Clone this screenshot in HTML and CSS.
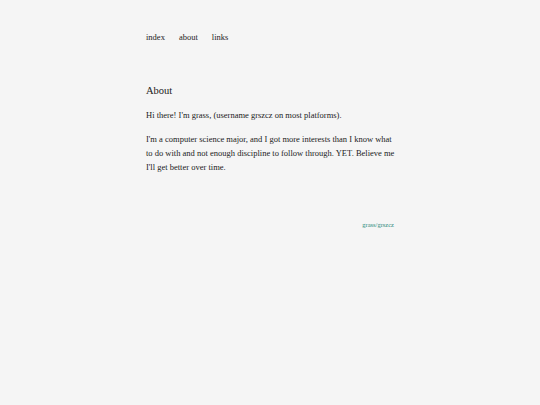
FILE: index.html
```html
<!DOCTYPE html>
<html>
<head>
<meta charset="utf-8">
<link rel="stylesheet" href="styles.css">
</head>
<body>
<div class="page">
  <nav class="nav">
    <a href="#">index</a>
    <a href="#">about</a>
    <a href="#">links</a>
  </nav>
  <main class="content">
    <h1 class="title">About</h1>
    <p>Hi there! I'm grass, (username grszcz on most platforms).</p>
    <p>I'm a computer science major, and I got more interests than I know what to do with and not enough discipline to follow through. YET. Believe me I'll get better over time.</p>
  </main>
  <footer class="footer"><a href="#">grass/grszcz</a></footer>
</div>
</body>
</html>
```
FILE: styles.css
```css
html, body {
  margin: 0;
  padding: 0;
  background: #f5f5f5;
}
body {
  font-family: "Liberation Serif", serif;
  color: #222;
  font-size: 8.5px;
  line-height: 14px;
}
.page {
  width: 248px;
  margin: 0 auto;
  padding-top: 30px;
}
.nav {
  display: flex;
  gap: 14px;
}
.nav a {
  color: #222;
  text-decoration: none;
}
.content {
  margin-top: 39px;
  margin-right: -4px;
}
.title {
  font-size: 10.5px;
  font-weight: normal;
  margin: 0 0 9px;
  line-height: 16px;
}
.content p {
  margin: 0 0 10px;
}
.footer {
  margin-top: 44px;
  text-align: right;
  font-size: 6.5px;
}
.footer a {
  color: #2a8a7a;
  text-decoration: none;
}
```
